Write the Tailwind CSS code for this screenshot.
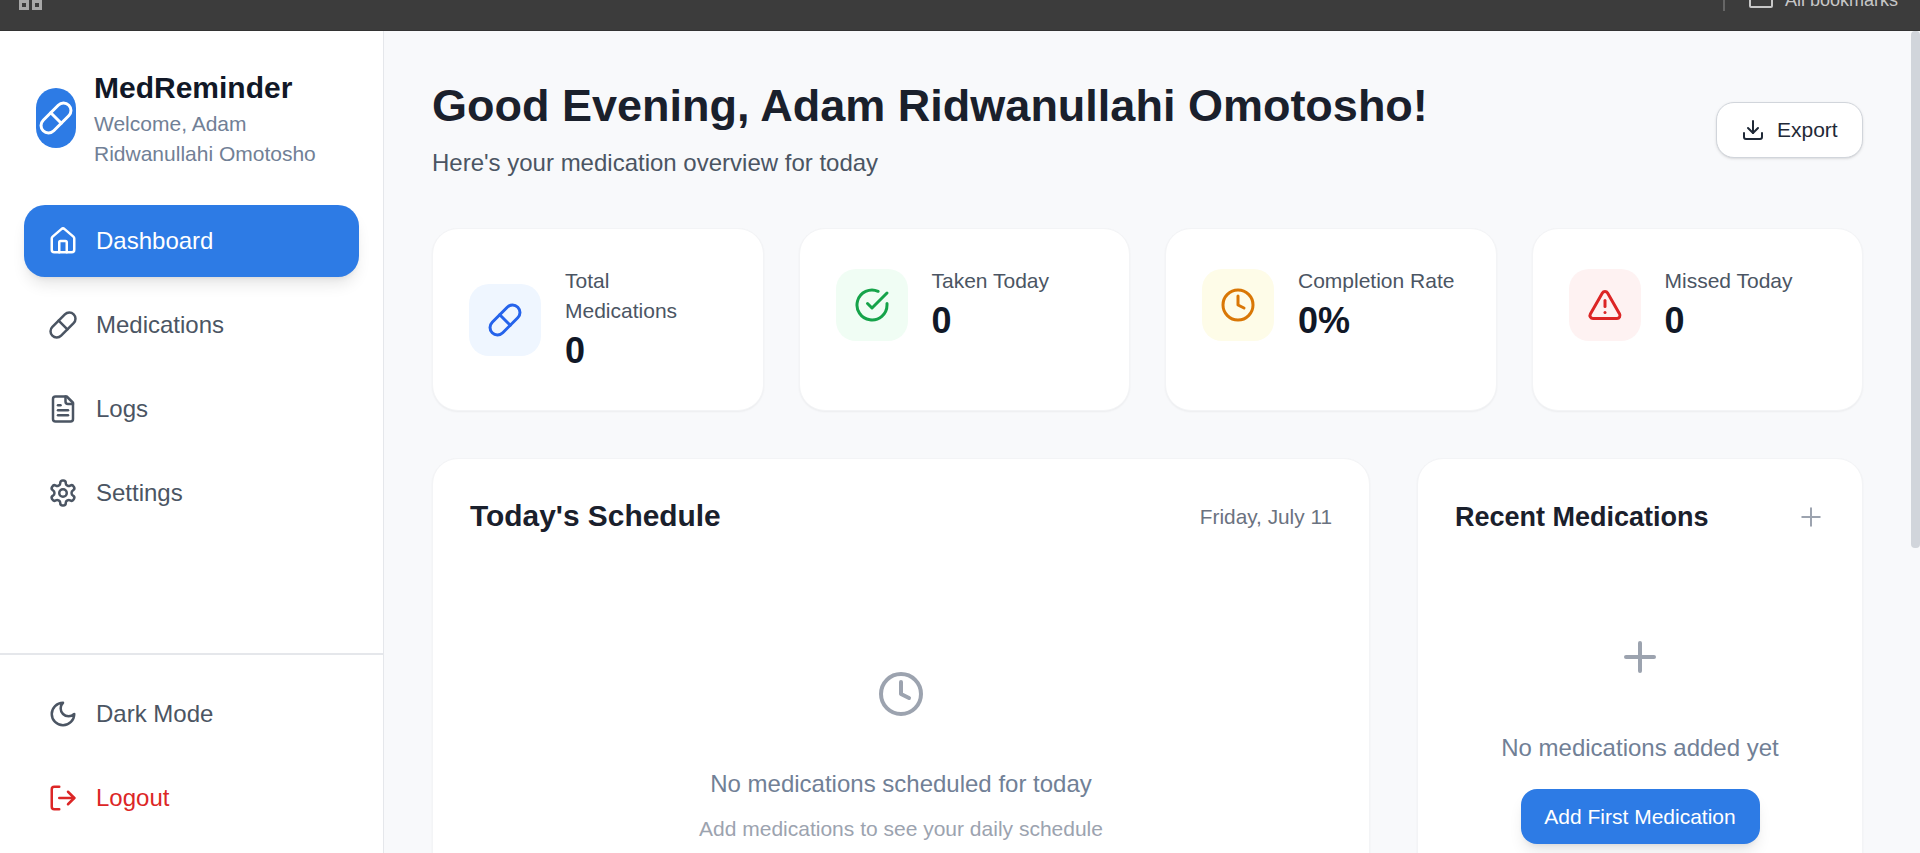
<!DOCTYPE html>
<html lang="en">
<head>
    <meta charset="UTF-8">
    <meta name="viewport" content="width=device-width, initial-scale=1.0">
    <title>MedReminder</title>
    <script src="https://cdn.jsdelivr.net/npm/@tailwindcss/browser@4"></script>
</head>
<body class="h-screen flex flex-col overflow-hidden bg-[#f8f9fb] font-['Liberation_Sans',Arial,sans-serif]">
    <!-- browser bookmarks bar, cut off at the top -->
    <div class="h-[31px] shrink-0 overflow-hidden bg-[#3c3c3c] border-b border-[#333333] flex justify-between">
        <div class="flex gap-[3px] pl-[19px]">
            <div class="w-[10px] h-[10px] border-[3px] border-[#a8a8a8]"></div>
            <div class="w-[10px] h-[10px] border-[3px] border-[#a8a8a8]"></div>
        </div>
        <div class="flex items-start pr-[22px]">
            <div class="w-[2px] h-[11px] bg-[#666666]"></div>
            <div class="w-[24px] h-[24px] ml-[24px] -mt-[16px] rounded-[2px] border-2 border-[#c7c7c7]"></div>
            <div class="ml-[12px] -mt-[10px] text-[#c7c7c7] text-[18px] leading-[20px]">All bookmarks</div>
        </div>
    </div>

    <div class="flex-1 flex min-h-0">
        <!-- Sidebar -->
        <aside class="w-[384px] shrink-0 bg-white border-r border-[#e5e7eb] flex flex-col">
            <div class="flex items-center gap-[18px] pl-[36px] pt-[39px] pr-[24px]">
                <div class="w-[40px] h-[60px] mb-[3px] shrink-0 rounded-[20px] bg-[#2d7be5] flex items-center justify-center text-white">
                    <svg class="w-[36px] h-[36px] shrink-0" viewBox="0 0 24 24" fill="none" stroke="currentColor" stroke-width="2" stroke-linecap="round" stroke-linejoin="round"><path d="m10.5 20.5 10-10a4.95 4.95 0 1 0-7-7l-10 10a4.95 4.95 0 1 0 7 7Z"/><path d="m8.5 8.5 7 7"/></svg>
                </div>
                <div>
                    <div class="text-[30px] leading-[36px] font-bold text-[#111827]">MedReminder</div>
                    <div class="text-[21px] leading-[30px] text-[#718096] mt-[3px]">Welcome, Adam<br>Ridwanullahi Omotosho</div>
                </div>
            </div>

            <nav class="flex-1 px-[24px] pt-[36px] flex flex-col gap-[12px] text-[24px] text-[#4b5563]">
                <a class="h-[72px] rounded-[21px] bg-[#2d7be5] text-white shadow-lg flex items-center gap-[18px] pl-[24px]">
                    <svg class="w-[30px] h-[30px]" viewBox="0 0 24 24" fill="none" stroke="currentColor" stroke-width="2" stroke-linecap="round" stroke-linejoin="round"><path d="M15 21v-8a1 1 0 0 0-1-1h-4a1 1 0 0 0-1 1v8"/><path d="M3 10a2 2 0 0 1 .709-1.528l7-5.999a2 2 0 0 1 2.582 0l7 5.999A2 2 0 0 1 21 10v9a2 2 0 0 1-2 2H5a2 2 0 0 1-2-2z"/></svg>
                    Dashboard
                </a>
                <a class="h-[72px] flex items-center gap-[18px] pl-[24px]">
                    <svg class="w-[30px] h-[30px]" viewBox="0 0 24 24" fill="none" stroke="currentColor" stroke-width="2" stroke-linecap="round" stroke-linejoin="round"><path d="m10.5 20.5 10-10a4.95 4.95 0 1 0-7-7l-10 10a4.95 4.95 0 1 0 7 7Z"/><path d="m8.5 8.5 7 7"/></svg>
                    Medications
                </a>
                <a class="h-[72px] flex items-center gap-[18px] pl-[24px]">
                    <svg class="w-[30px] h-[30px]" viewBox="0 0 24 24" fill="none" stroke="currentColor" stroke-width="2" stroke-linecap="round" stroke-linejoin="round"><path d="M15 2H6a2 2 0 0 0-2 2v16a2 2 0 0 0 2 2h12a2 2 0 0 0 2-2V7Z"/><path d="M14 2v4a2 2 0 0 0 2 2h4"/><path d="M10 9H8"/><path d="M16 13H8"/><path d="M16 17H8"/></svg>
                    Logs
                </a>
                <a class="h-[72px] flex items-center gap-[18px] pl-[24px]">
                    <svg class="w-[30px] h-[30px]" viewBox="0 0 24 24" fill="none" stroke="currentColor" stroke-width="2" stroke-linecap="round" stroke-linejoin="round"><path d="M12.22 2h-.44a2 2 0 0 0-2 2v.18a2 2 0 0 1-1 1.73l-.43.25a2 2 0 0 1-2 0l-.15-.08a2 2 0 0 0-2.73.73l-.22.38a2 2 0 0 0 .73 2.73l.15.1a2 2 0 0 1 1 1.72v.51a2 2 0 0 1-1 1.74l-.15.09a2 2 0 0 0-.73 2.73l.22.38a2 2 0 0 0 2.73.73l.15-.08a2 2 0 0 1 2 0l.43.25a2 2 0 0 1 1 1.73V20a2 2 0 0 0 2 2h.44a2 2 0 0 0 2-2v-.18a2 2 0 0 1 1-1.73l.43-.25a2 2 0 0 1 2 0l.15.08a2 2 0 0 0 2.73-.73l.22-.39a2 2 0 0 0-.73-2.73l-.15-.08a2 2 0 0 1-1-1.74v-.5a2 2 0 0 1 1-1.74l.15-.09a2 2 0 0 0 .73-2.73l-.22-.38a2 2 0 0 0-2.73-.73l-.15.08a2 2 0 0 1-2 0l-.43-.25a2 2 0 0 1-1-1.73V4a2 2 0 0 0-2-2z"/><circle cx="12" cy="12" r="3"/></svg>
                    Settings
                </a>
            </nav>

            <div class="h-[200px] shrink-0 border-t-2 border-[#e5e7eb] px-[24px] pt-[23px] flex flex-col gap-[12px] text-[24px]">
                <a class="h-[72px] shrink-0 flex items-center gap-[18px] pl-[24px] text-[#4b5563]">
                    <svg class="w-[30px] h-[30px]" viewBox="0 0 24 24" fill="none" stroke="currentColor" stroke-width="2" stroke-linecap="round" stroke-linejoin="round"><path d="M12 3a6 6 0 0 0 9 9 9 9 0 1 1-9-9Z"/></svg>
                    Dark Mode
                </a>
                <a class="h-[72px] shrink-0 flex items-center gap-[18px] pl-[24px] text-[#dc2626]">
                    <svg class="w-[30px] h-[30px]" viewBox="0 0 24 24" fill="none" stroke="currentColor" stroke-width="2" stroke-linecap="round" stroke-linejoin="round"><path d="M9 21H5a2 2 0 0 1-2-2V5a2 2 0 0 1 2-2h4"/><path d="m16 17 5-5-5-5"/><path d="M21 12H9"/></svg>
                    Logout
                </a>
            </div>
        </aside>

        <!-- Main -->
        <main class="flex-1 min-w-0 overflow-hidden pt-[48px] px-[48px]">
            <div class="flex items-center justify-between">
                <div>
                    <h1 class="text-[45px] leading-[54px] font-bold text-[#1a202c]">Good Evening, Adam Ridwanullahi Omotosho!</h1>
                    <p class="text-[24px] leading-[35px] text-[#4b5563] mt-[12px]">Here's your medication overview for today</p>
                </div>
                <button class="w-[147px] h-[56px] rounded-[18px] bg-white border border-[#d1d5db] shadow-sm flex items-center gap-[12px] pl-[24px] text-[21px] text-[#1f2937]">
                    <svg class="w-[24px] h-[24px]" viewBox="0 0 24 24" fill="none" stroke="currentColor" stroke-width="2" stroke-linecap="round" stroke-linejoin="round"><path d="M21 15v4a2 2 0 0 1-2 2H5a2 2 0 0 1-2-2v-4"/><polyline points="7 10 12 15 17 10"/><line x1="12" y1="15" x2="12" y2="3"/></svg>
                    Export
                </button>
            </div>

            <!-- Stat cards -->
            <div class="grid grid-cols-4 gap-[35px] mt-[48px]">
                <div class="bg-white rounded-[26px] shadow-xs border border-[#f3f4f6] p-[36px] h-[183px]">
                    <div class="flex items-center gap-[24px]">
                        <div class="w-[72px] h-[72px] shrink-0 rounded-[20px] bg-[#eff6ff] flex items-center justify-center text-[#2563eb]">
                            <svg class="w-[36px] h-[36px]" viewBox="0 0 24 24" fill="none" stroke="currentColor" stroke-width="2" stroke-linecap="round" stroke-linejoin="round"><path d="m10.5 20.5 10-10a4.95 4.95 0 1 0-7-7l-10 10a4.95 4.95 0 1 0 7 7Z"/><path d="m8.5 8.5 7 7"/></svg>
                        </div>
                        <div>
                            <div class="text-[21px] leading-[30px] text-[#4b5563] mt-[1px]">Total<br>Medications</div>
                            <div class="text-[36px] leading-[49px] font-bold text-[#111827]">0</div>
                        </div>
                    </div>
                </div>
                <div class="bg-white rounded-[26px] shadow-xs border border-[#f3f4f6] p-[36px] h-[183px]">
                    <div class="flex items-center gap-[24px]">
                        <div class="w-[72px] h-[72px] shrink-0 rounded-[20px] bg-[#f0fdf4] flex items-center justify-center text-[#16a34a]">
                            <svg class="w-[36px] h-[36px]" viewBox="0 0 24 24" fill="none" stroke="currentColor" stroke-width="2" stroke-linecap="round" stroke-linejoin="round"><path d="M22 11.08V12a10 10 0 1 1-5.93-9.14"/><path d="m9 11 3 3L22 4"/></svg>
                        </div>
                        <div>
                            <div class="text-[21px] leading-[30px] text-[#4b5563] mt-[1px]">Taken Today</div>
                            <div class="text-[36px] leading-[49px] font-bold text-[#111827]">0</div>
                        </div>
                    </div>
                </div>
                <div class="bg-white rounded-[26px] shadow-xs border border-[#f3f4f6] p-[36px] h-[183px]">
                    <div class="flex items-center gap-[24px]">
                        <div class="w-[72px] h-[72px] shrink-0 rounded-[20px] bg-[#fefce8] flex items-center justify-center text-[#d97706]">
                            <svg class="w-[36px] h-[36px]" viewBox="0 0 24 24" fill="none" stroke="currentColor" stroke-width="2" stroke-linecap="round" stroke-linejoin="round"><circle cx="12" cy="12" r="10"/><polyline points="12 6 12 12 16 14"/></svg>
                        </div>
                        <div>
                            <div class="text-[21px] leading-[30px] text-[#4b5563] mt-[1px]">Completion Rate</div>
                            <div class="text-[36px] leading-[49px] font-bold text-[#111827]">0%</div>
                        </div>
                    </div>
                </div>
                <div class="bg-white rounded-[26px] shadow-xs border border-[#f3f4f6] p-[36px] h-[183px]">
                    <div class="flex items-center gap-[24px]">
                        <div class="w-[72px] h-[72px] shrink-0 rounded-[20px] bg-[#fef2f2] flex items-center justify-center text-[#dc2626]">
                            <svg class="w-[36px] h-[36px]" viewBox="0 0 24 24" fill="none" stroke="currentColor" stroke-width="2" stroke-linecap="round" stroke-linejoin="round"><path d="m21.73 18-8-14a2 2 0 0 0-3.48 0l-8 14A2 2 0 0 0 4 21h16a2 2 0 0 0 1.73-3"/><path d="M12 9v4"/><path d="M12 17h.01"/></svg>
                        </div>
                        <div>
                            <div class="text-[21px] leading-[30px] text-[#4b5563] mt-[1px]">Missed Today</div>
                            <div class="text-[36px] leading-[49px] font-bold text-[#111827]">0</div>
                        </div>
                    </div>
                </div>
            </div>

            <!-- Lower cards -->
            <div class="grid grid-cols-[938px_446px] gap-[47px] mt-[47px]">
                <section class="bg-white rounded-[26px] shadow-xs border border-[#f3f4f6] h-[500px] px-[37px] pt-[36px]">
                    <div class="flex items-center justify-between h-[44px]">
                        <h2 class="text-[29.9px] -mt-[2px] font-bold text-[#1a202c]">Today's Schedule</h2>
                        <span class="text-[20.8px] text-[#6b7280]">Friday, July 11</span>
                    </div>
                    <div class="flex flex-col items-center pt-[131px] text-center">
                        <svg class="w-[48px] h-[48px] text-[#9ca3af]" viewBox="0 0 24 24" fill="none" stroke="currentColor" stroke-width="2" stroke-linecap="round" stroke-linejoin="round"><circle cx="12" cy="12" r="10"/><polyline points="12 6 12 12 16 14"/></svg>
                        <p class="text-[24px] leading-[35px] text-[#718096] mt-[48px]">No medications scheduled for today</p>
                        <p class="text-[21px] leading-[30px] text-[#9ca3af] mt-[13px]">Add medications to see your daily schedule</p>
                    </div>
                </section>
                <section class="bg-white rounded-[26px] shadow-xs border border-[#f3f4f6] h-[500px] px-[37px] pt-[36px]">
                    <div class="flex items-center justify-between h-[44px]">
                        <h2 class="text-[27px] font-bold text-[#1a202c]">Recent Medications</h2>
                        <svg class="w-[30px] h-[30px] -mr-[1px] text-[#9ca3af]" viewBox="0 0 24 24" fill="none" stroke="currentColor" stroke-width="1.6" stroke-linecap="round" stroke-linejoin="round"><path d="M5 12h14"/><path d="M12 5v14"/></svg>
                    </div>
                    <div class="flex flex-col items-center pt-[94px] text-center">
                        <svg class="w-[48px] h-[48px] text-[#9ca3af]" viewBox="0 0 24 24" fill="none" stroke="currentColor" stroke-width="2" stroke-linecap="round" stroke-linejoin="round"><path d="M5 12h14"/><path d="M12 5v14"/></svg>
                        <p class="text-[24px] leading-[35px] text-[#718096] mt-[49px]">No medications added yet</p>
                        <button class="w-[239px] h-[55px] mt-[24px] rounded-[16px] bg-[#2d7be5] text-white text-[21px] shadow-lg">Add First Medication</button>
                    </div>
                </section>
            </div>
        </main>

        <!-- scrollbar -->
        <div class="w-[9px] shrink-0 bg-[#f8f9fb]">
            <div class="h-[517px] rounded-[4px] bg-[#d1d5db]"></div>
        </div>
    </div>
</body>
</html>
